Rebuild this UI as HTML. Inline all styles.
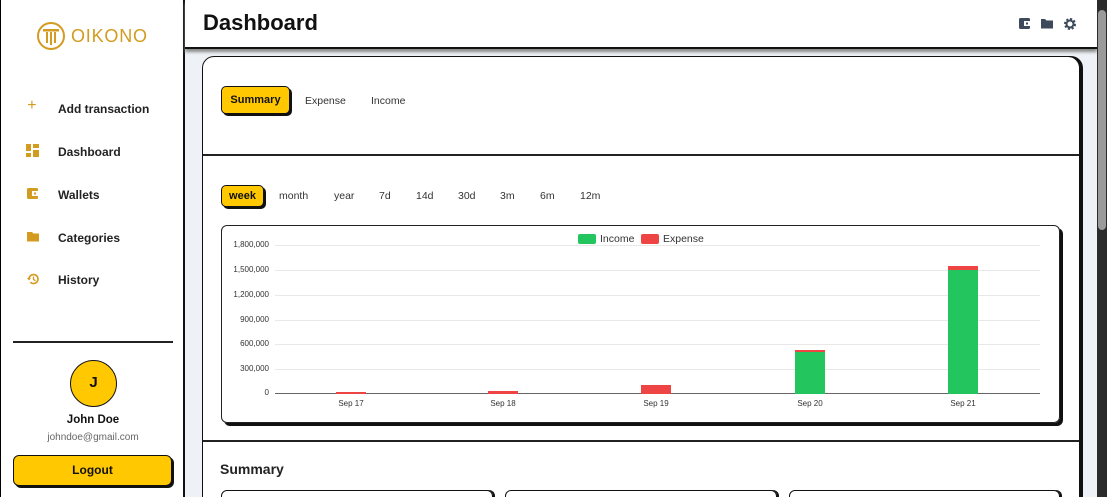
<!DOCTYPE html>
<html style="width:1107px;height:497px;overflow:hidden"><head><style>
*{box-sizing:border-box;margin:0;padding:0}
body{width:1107px;height:497px;overflow:hidden;font-family:"Liberation Sans",sans-serif;background:#eef2f7;position:relative;color:#111}
.abs{position:absolute}
.side{left:0;top:0;width:185px;height:497px;background:#fff;border-left:1px solid #000;border-right:2px solid #111}
.nav{position:absolute;left:25px;font-size:12px;font-weight:bold;color:#222}
.nav i{position:absolute;left:0;top:-1px;width:14px;height:14px}
.nav span{position:absolute;left:32px;white-space:nowrap}
.btn{background:#ffc800;border:1.5px solid #111;border-radius:5px;box-shadow:2px 2px 0 #111;font-weight:bold;font-size:11px;text-align:center}
.tab{font-size:10.5px;color:#333;position:absolute}
.yl{position:absolute;right:0;font-size:8px;color:#333;text-align:right;width:60px}
.grid{position:absolute;left:275px;width:765px;height:1px;background:#e8e8e8}
.xl{position:absolute;font-size:8px;color:#333;width:40px;text-align:center}
.bar{position:absolute;width:30px}
</style></head><body>
<div class="abs" style="left:202px;top:56px;width:878px;height:450px;background:#fff;border:1.5px solid #111;border-radius:12px 12px 0 0;box-shadow:3px 0 0 #111"></div>
<div class="abs side">
  <svg class="abs" style="left:35px;top:21px" width="30" height="30" viewBox="0 0 30 30"><circle cx="15" cy="15" r="13" fill="none" stroke="#d39b1f" stroke-width="2"/><rect x="7" y="8" width="16" height="2.5" fill="#d39b1f"/><rect x="10" y="11" width="2" height="11" fill="#d39b1f"/><rect x="14" y="11" width="2" height="13" fill="#d39b1f"/><rect x="18" y="11" width="2" height="11" fill="#d39b1f"/></svg>
  <div class="abs" style="left:70px;top:26px;font-size:18px;color:#d39b1f;letter-spacing:0.8px">OIKONO</div>
  <div class="nav" style="top:102px"><i style="color:#d39b1f;font-size:16px;font-weight:normal;top:-5px;left:1px">+</i><span>Add transaction</span></div>
  <div class="nav" style="top:145px"><i><svg width="13" height="13"><rect x="0" y="0" width="5" height="7" fill="#d39b1f"/><rect x="7" y="0" width="6" height="4" fill="#d39b1f"/><rect x="0" y="9" width="5" height="4" fill="#d39b1f"/><rect x="7" y="6" width="6" height="7" fill="#d39b1f"/></svg></i><span>Dashboard</span></div>
  <div class="nav" style="top:188px"><i><svg width="13" height="13"><rect x="1" y="1" width="11" height="11" rx="1.5" fill="#d39b1f"/><rect x="6" y="4" width="6" height="5" fill="#fff"/><rect x="8" y="5.5" width="2" height="2" fill="#d39b1f"/></svg></i><span>Wallets</span></div>
  <div class="nav" style="top:231px"><i><svg width="14" height="13"><path d="M1 2h5l1.5 1.5H13v8H1z" fill="#d39b1f"/></svg></i><span>Categories</span></div>
  <div class="nav" style="top:273px"><i><svg width="14" height="14" viewBox="0 0 14 14"><path d="M3 7a4.5 4.5 0 1 1 1.3 3.2" fill="none" stroke="#d39b1f" stroke-width="1.6"/><path d="M1 6l2 2.5L5 6z" fill="#d39b1f"/><path d="M7.5 4.5v3l2 1.2" fill="none" stroke="#d39b1f" stroke-width="1.3"/></svg></i><span>History</span></div>
  <div class="abs" style="left:12px;top:341px;width:160px;height:2px;background:#222"></div>
  <div class="abs" style="left:69px;top:360px;width:47px;height:47px;border-radius:50%;background:#ffc800;border:1.5px solid #111;text-align:center;line-height:44px;font-weight:bold;font-size:15px">J</div>
  <div class="abs" style="left:0;width:184px;top:414px;text-align:center;font-size:11.5px;font-weight:bold">John Doe</div>
  <div class="abs" style="left:0;width:184px;top:432px;text-align:center;font-size:10px;color:#666">johndoe@gmail.com</div>
  <div class="abs btn" style="left:12px;top:455px;width:159px;height:31px;line-height:28px;font-size:12px;border-radius:6px">Logout</div>
</div>
<div class="abs" style="left:185px;top:0;width:912px;height:49px;background:#fff;border-bottom:2px solid #111;box-shadow:0 3px 3px #888"></div>
<div class="abs" style="left:203px;top:10px;font-size:22px;font-weight:bold">Dashboard</div>
<svg class="abs" style="left:1018px;top:17px" width="60" height="14"><rect x="1" y="1" width="11" height="11" rx="1.5" fill="#3d4a5c"/><rect x="6" y="4" width="6" height="5" fill="#fff"/><rect x="8" y="5.5" width="2" height="2" fill="#3d4a5c"/><path d="M23 2h4l1.5 1.5H35v8H23z" fill="#3d4a5c"/><circle cx="52" cy="7" r="4.5" fill="none" stroke="#3d4a5c" stroke-width="3" stroke-dasharray="2 1.5"/><circle cx="52" cy="7" r="3.5" fill="none" stroke="#3d4a5c" stroke-width="2"/></svg>
<div class="abs" style="left:1097px;top:0;width:10px;height:497px;background:#2b2b2b"><div style="margin:10px 1px;width:8px;height:220px;background:#9a9a9a;border-radius:4px"></div></div>
<div class="abs btn" style="left:221px;top:86px;width:69px;height:28px;line-height:26px">Summary</div>
<div class="tab" style="left:305px;top:95px">Expense</div>
<div class="tab" style="left:371px;top:95px">Income</div>
<div class="abs" style="left:203px;top:154px;width:876px;height:1.5px;background:#222"></div>
<div class="abs btn" style="left:221px;top:185px;width:43px;height:22px;line-height:20px">week</div>
<div class="tab" style="left:279px;top:190px">month</div>
<div class="tab" style="left:334px;top:190px">year</div>
<div class="tab" style="left:379px;top:190px">7d</div>
<div class="tab" style="left:416px;top:190px">14d</div>
<div class="tab" style="left:458px;top:190px">30d</div>
<div class="tab" style="left:500px;top:190px">3m</div>
<div class="tab" style="left:540px;top:190px">6m</div>
<div class="tab" style="left:580px;top:190px">12m</div>
<div class="abs" style="left:221px;top:225px;width:839px;height:198px;border:1.5px solid #222;border-radius:6px;box-shadow:3px 3px 0 #111"></div>
<div class="abs" style="left:578px;top:234px;width:18px;height:10px;background:#22c55e;border-radius:2px"></div>
<div class="abs" style="left:600px;top:233px;font-size:10.5px;color:#333">Income</div>
<div class="abs" style="left:641px;top:234px;width:18px;height:10px;background:#ef4444;border-radius:2px"></div>
<div class="abs" style="left:663px;top:233px;font-size:10.5px;color:#333">Expense</div>
<div class="grid" style="top:245px"></div><div class="grid" style="top:270px"></div><div class="grid" style="top:295px"></div><div class="grid" style="top:320px"></div><div class="grid" style="top:344px"></div><div class="grid" style="top:369px"></div>
<div class="abs" style="left:275px;top:393px;width:765px;height:1px;background:#666"></div>
<div class="yl" style="left:209px;top:240px">1,800,000</div>
<div class="yl" style="left:209px;top:265px">1,500,000</div>
<div class="yl" style="left:209px;top:290px">1,200,000</div>
<div class="yl" style="left:209px;top:315px">900,000</div>
<div class="yl" style="left:209px;top:339px">600,000</div>
<div class="yl" style="left:209px;top:364px">300,000</div>
<div class="yl" style="left:209px;top:388px">0</div>
<div class="bar" style="left:336px;top:392px;height:2px;background:#ef4444"></div>
<div class="bar" style="left:488px;top:391px;height:3px;background:#ef4444"></div>
<div class="bar" style="left:641px;top:385px;height:9px;background:#ef4444"></div>
<div class="bar" style="left:795px;top:350px;height:2px;background:#ef4444"></div>
<div class="bar" style="left:795px;top:352px;height:42px;background:#22c55e"></div>
<div class="bar" style="left:948px;top:266px;height:4px;background:#ef4444"></div>
<div class="bar" style="left:948px;top:270px;height:124px;background:#22c55e"></div>
<div class="xl" style="left:331px;top:399px">Sep 17</div>
<div class="xl" style="left:483px;top:399px">Sep 18</div>
<div class="xl" style="left:636px;top:399px">Sep 19</div>
<div class="xl" style="left:790px;top:399px">Sep 20</div>
<div class="xl" style="left:943px;top:399px">Sep 21</div>
<div class="abs" style="left:203px;top:440px;width:876px;height:1.5px;background:#222"></div>
<div class="abs" style="left:220px;top:461px;font-size:14px;font-weight:bold;color:#222">Summary</div>
<div class="abs" style="left:221px;top:490px;width:272px;height:20px;border:1.5px solid #111;border-radius:6px;box-shadow:2px 0 0 #111"></div>
<div class="abs" style="left:505px;top:490px;width:272px;height:20px;border:1.5px solid #111;border-radius:6px;box-shadow:2px 0 0 #111"></div>
<div class="abs" style="left:789px;top:490px;width:271px;height:20px;border:1.5px solid #111;border-radius:6px;box-shadow:2px 0 0 #111"></div>
</body></html>
